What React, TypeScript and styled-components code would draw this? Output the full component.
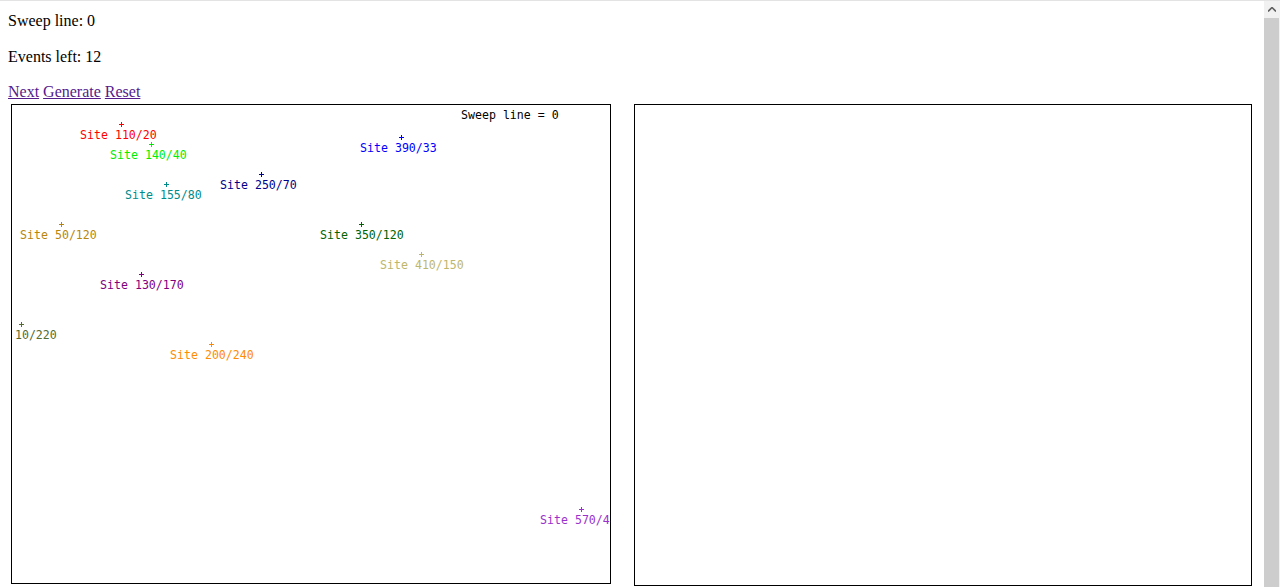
import styled, { createGlobalStyle } from 'styled-components';

const GlobalStyle = createGlobalStyle`
  html, body {
    margin: 0;
    padding: 0;
    background: #ffffff;
    overflow: hidden;
  }
  body {
    font-family: "Liberation Serif", "Times New Roman", serif;
    font-size: 16px;
    color: #000000;
  }
`;

const Shell = styled.div`
  box-sizing: border-box;
  height: 587px;
  display: flex;
  border-top: 1px solid #e3e3e3;
`;

const Content = styled.div`
  flex: 1;
  min-width: 0;
  overflow: hidden;
`;

const ScrollBar = styled.div`
  width: 16px;
  flex: none;
  display: flex;
  flex-direction: column;
  background: #f1f1f1;
`;

const ScrollButton = styled.div`
  height: 17px;
  display: flex;
  align-items: center;
  justify-content: center;
  background: #f1f1f1;
`;

const ScrollThumb = styled.div`
  flex: 1;
  margin-right: 1px;
  background: #cdcdcd;
`;

const Page = styled.div`
  padding: 11px 8px 8px 8px;
`;

const InfoLine = styled.div`
  line-height: 18px;
  margin-bottom: 17.5px;
`;

const LinkRow = styled.div`
  line-height: 18px;
`;

const ActionLink = styled.a`
  color: #551a8b;
  text-decoration: underline;
  cursor: pointer;
`;

const Panels = styled.div`
  display: flex;
  align-items: flex-start;
  gap: 23px;
  margin-top: 3px;
  padding-left: 3px;
`;

const Board = styled.div<{ $w: number; $h: number }>`
  box-sizing: border-box;
  flex: none;
  width: ${({ $w }) => $w}px;
  height: ${({ $h }) => $h}px;
  border: 1px solid #000000;
  overflow: hidden;
  background: #ffffff;
`;

const Plot = styled.svg`
  display: block;
  font-family: "DejaVu Sans Mono", "Liberation Mono", monospace;
  font-size: 11.6px;
`;

interface Site {
  x: number;
  y: number;
  color: string;
}

const sites: Site[] = [
  { x: 110, y: 20, color: '#ff0000' },
  { x: 140, y: 40, color: '#00ee00' },
  { x: 390, y: 33, color: '#0000ff' },
  { x: 155, y: 80, color: '#008b8b' },
  { x: 250, y: 70, color: '#00008b' },
  { x: 50, y: 120, color: '#b8860b' },
  { x: 350, y: 120, color: '#006400' },
  { x: 410, y: 150, color: '#bdb76b' },
  { x: 130, y: 170, color: '#800080' },
  { x: 10, y: 220, color: '#556b2f' },
  { x: 200, y: 240, color: '#ff8c00' },
  { x: 570, y: 405, color: '#9932cc' },
];

function SiteMark({ x, y, color }: Site) {
  return (
    <g>
      <path
        d={`M${x - 2} ${y + 0.5}H${x + 3}M${x + 0.5} ${y - 2}V${y + 3}`}
        stroke={color}
        strokeWidth={1}
        shapeRendering="crispEdges"
      />
      <text x={x - 41} y={y + 15} fill={color}>
        Site {x}/{y}
      </text>
    </g>
  );
}

export default function App() {
  const sweep = 0;
  return (
    <>
      <GlobalStyle />
      <Shell>
        <Content>
          <Page>
            <InfoLine>Sweep line: {sweep}</InfoLine>
            <InfoLine>Events left: {sites.length}</InfoLine>
            <LinkRow>
              <ActionLink>Next</ActionLink> <ActionLink>Generate</ActionLink>{' '}
              <ActionLink>Reset</ActionLink>
            </LinkRow>
            <Panels>
              <Board $w={600} $h={480}>
                <Plot width={598} height={478} viewBox="1 1 598 478">
                  <text x={450} y={15} fill="#000000">
                    Sweep line = {sweep}
                  </text>
                  {sites.map((s) => (
                    <SiteMark key={`${s.x}-${s.y}`} {...s} />
                  ))}
                </Plot>
              </Board>
              <Board $w={618} $h={482} />
            </Panels>
          </Page>
        </Content>
        <ScrollBar>
          <ScrollButton>
            <svg width="8" height="5" viewBox="0 0 8 5">
              <path d="M0 4.5L4 0.5L8 4.5" fill="none" stroke="#606060" strokeWidth="1.6" />
            </svg>
          </ScrollButton>
          <ScrollThumb />
        </ScrollBar>
      </Shell>
    </>
  );
}
